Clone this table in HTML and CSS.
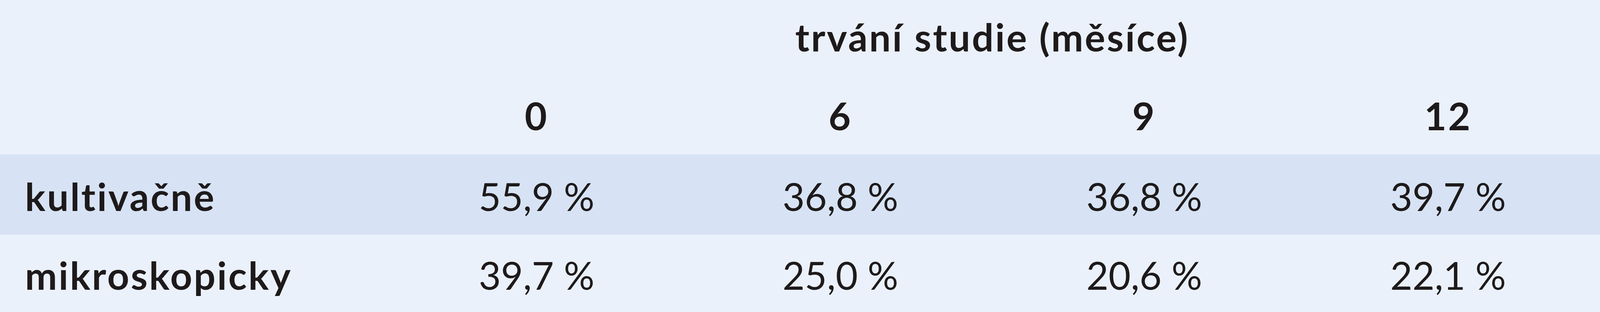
FILE: index.html
```html
<!DOCTYPE html>
<html lang="cs">
<head>
<meta charset="utf-8">
<title>Tabulka</title>
<link rel="stylesheet" href="styles.css">
</head>
<body>
<table class="data">
  <colgroup>
    <col class="col-label">
    <col class="col-val">
    <col class="col-val">
    <col class="col-val">
    <col class="col-val">
  </colgroup>
  <thead>
    <tr class="head1">
      <th class="label"></th>
      <th class="span" colspan="4">trvání studie (měsíce)</th>
    </tr>
    <tr class="head2">
      <th class="label"></th>
      <th>0</th>
      <th>6</th>
      <th>9</th>
      <th>12</th>
    </tr>
  </thead>
  <tbody>
    <tr class="row1 band">
      <th class="label">kultivačně</th>
      <td>55,9 %</td>
      <td>36,8 %</td>
      <td>36,8 %</td>
      <td>39,7 %</td>
    </tr>
    <tr class="row2">
      <th class="label">mikroskopicky</th>
      <td>39,7 %</td>
      <td>25,0 %</td>
      <td>20,6 %</td>
      <td>22,1 %</td>
    </tr>
  </tbody>
</table>
</body>
</html>
```

FILE: styles.css
```css
html, body {
  margin: 0;
  padding: 0;
  background: #ebf1fa;
}

.data {
  width: 100%;
  border-collapse: collapse;
  table-layout: fixed;
  font-family: Lato, "Open Sans", "DejaVu Sans", sans-serif;
  font-size: 98px;
  line-height: 98px;
  color: #1e1a1b;
}

.col-label {
  width: 24.04%;
}

.data th,
.data td {
  padding: 0;
  text-align: center;
  vertical-align: top;
  white-space: nowrap;
}

.data th {
  font-weight: bold;
  letter-spacing: 4px;
}

.data td {
  font-weight: normal;
  letter-spacing: 0;
}

.data th.label {
  text-align: left;
  padding-left: 64px;
}

.head1 {
  height: 197px;
}
.head1 th {
  padding-top: 45px;
}

.head2 {
  height: 199px;
}
.head2 th {
  padding-top: 50px;
}

.row1 {
  height: 206px;
}
.row1 th,
.row1 td {
  padding-top: 58px;
}

.row2 {
  height: 198px;
}
.row2 th,
.row2 td {
  padding-top: 54px;
}

.band {
  background: #d7e3f4;
}
```
